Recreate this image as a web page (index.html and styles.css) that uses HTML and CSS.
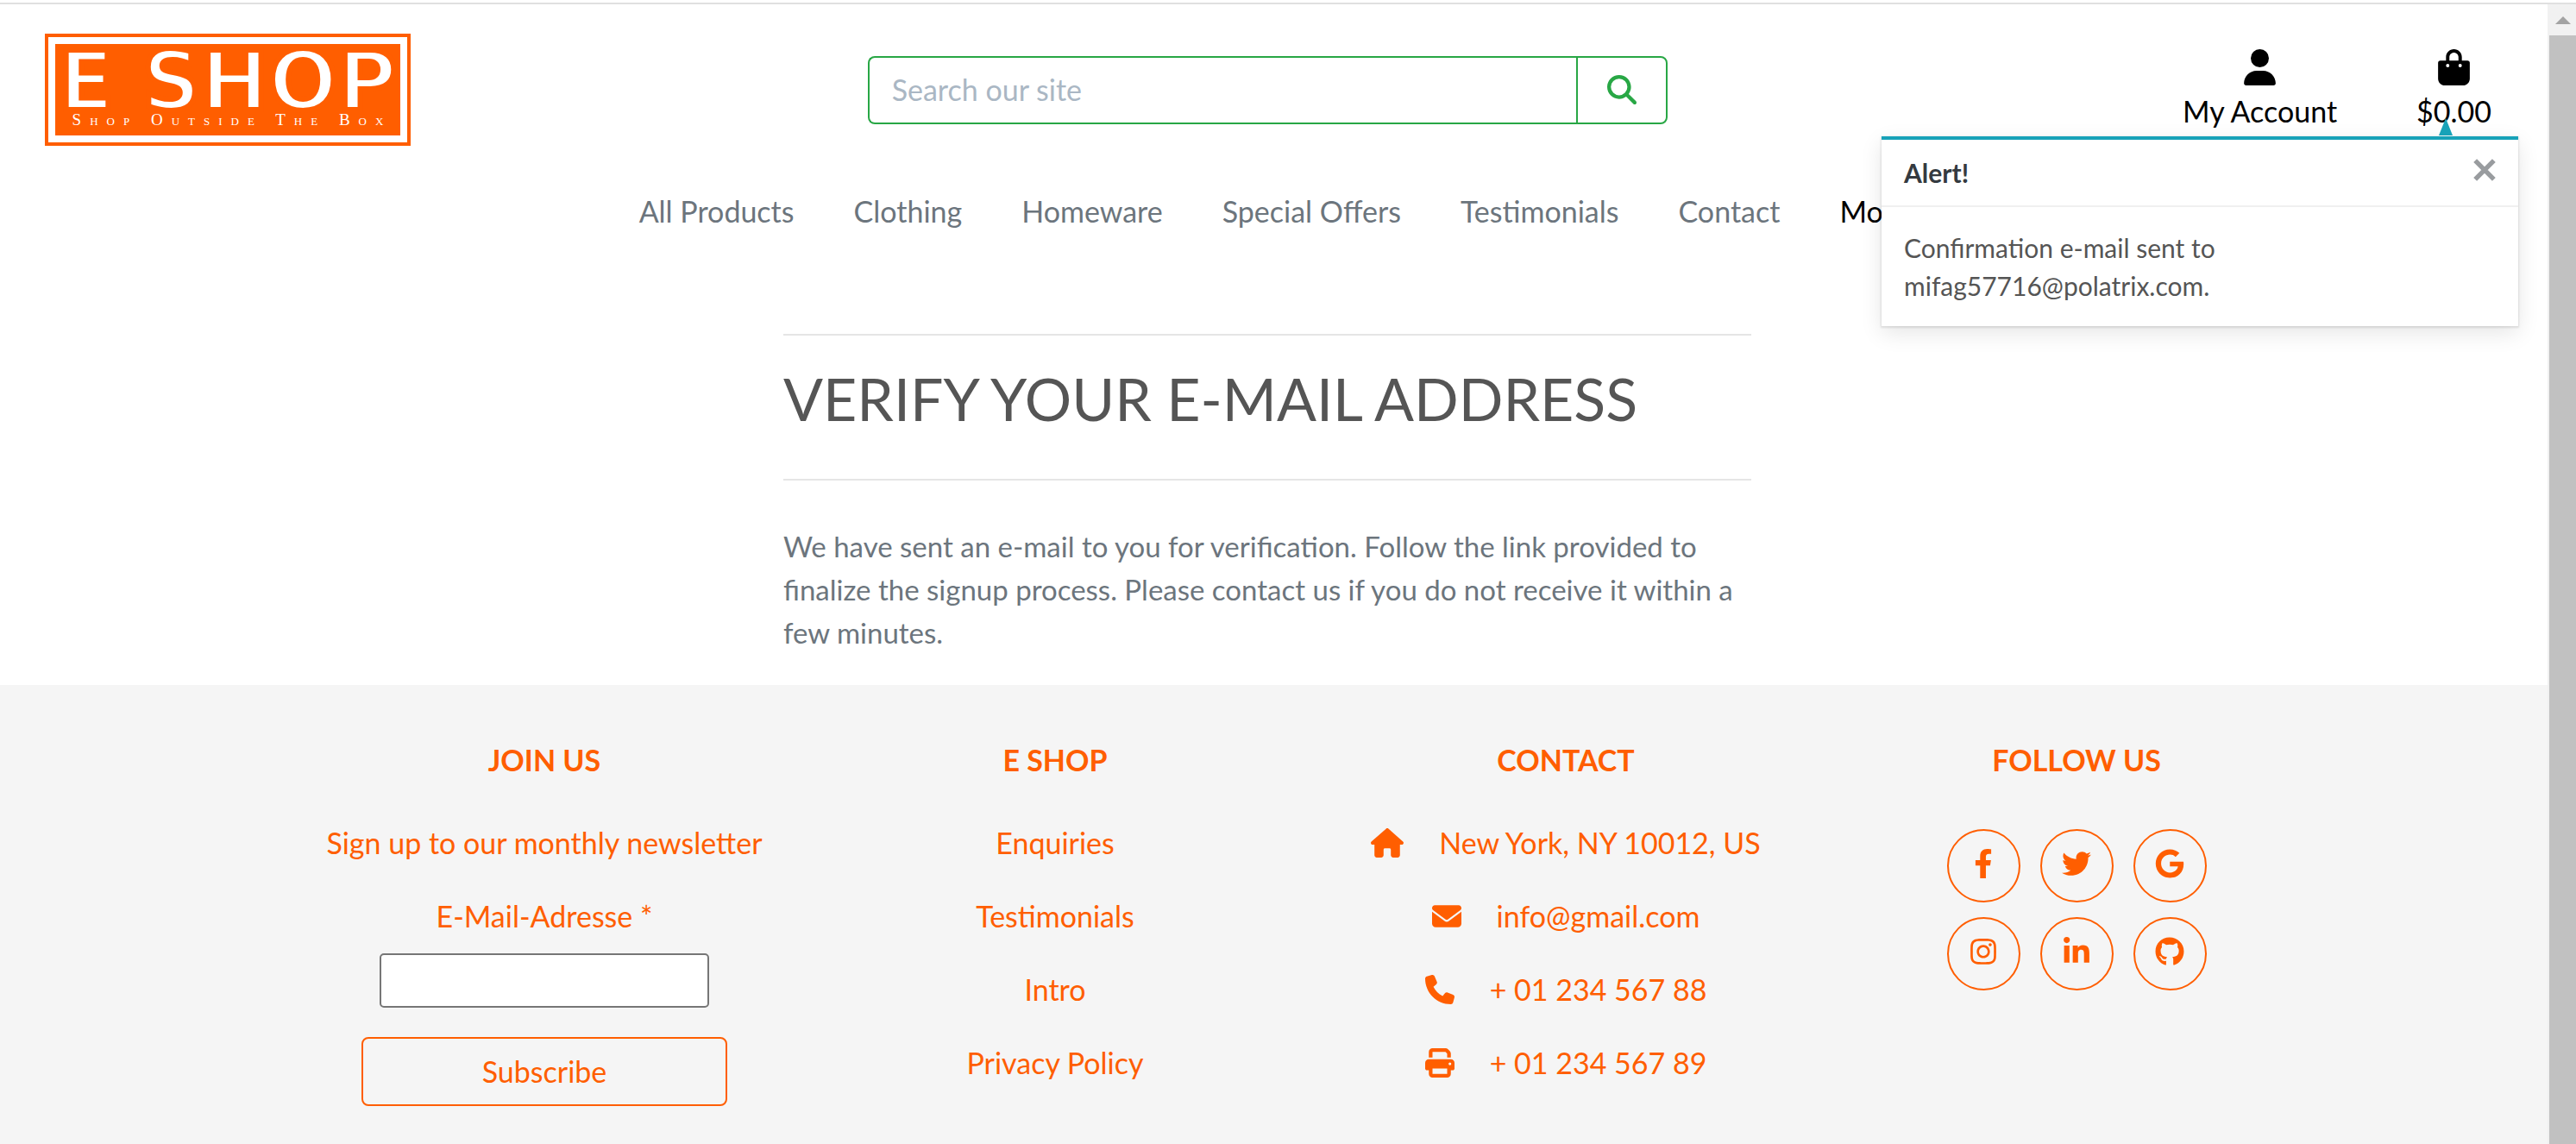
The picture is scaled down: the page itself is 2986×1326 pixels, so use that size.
FILE: index.html
```html
<!DOCTYPE html>
<html lang="en">
<head>
<meta charset="utf-8">
<title>E Shop - Verify Your E-mail Address</title>
<meta name="viewport" content="width=device-width, initial-scale=1">
<link rel="stylesheet" href="styles.css">
</head>
<body>
<svg class="sprite" aria-hidden="true">
  <symbol id="i-user" viewBox="0 0 448 512"><path d="M224 256A128 128 0 1 0 224 0a128 128 0 1 0 0 256zm-45.7 48C79.8 304 0 383.8 0 482.3C0 498.7 13.3 512 29.7 512H418.3c16.4 0 29.7-13.3 29.7-29.7C448 383.8 368.2 304 269.7 304H178.3z"/></symbol>
  <symbol id="i-bag" viewBox="0 0 448 512"><path d="M160 112c0-35.3 28.7-64 64-64s64 28.7 64 64v48H160V112zm-48 48H32c-17.7 0-32 14.3-32 32V416c0 53 43 96 96 96H352c53 0 96-43 96-96V192c0-17.7-14.3-32-32-32H336V112C336 50.1 285.9 0 224 0S112 50.1 112 112v48zm24 48a24 24 0 1 1 0 48 24 24 0 1 1 0-48zm152 24a24 24 0 1 1 48 0 24 24 0 1 1 -48 0z"/></symbol>
  <symbol id="i-search" viewBox="0 0 512 512"><path d="M416 208c0 45.9-14.9 88.3-40 122.7L502.6 457.4c12.5 12.5 12.5 32.8 0 45.3s-32.8 12.5-45.3 0L330.7 376c-34.4 25.2-76.8 40-122.7 40C93.1 416 0 322.9 0 208S93.1 0 208 0S416 93.1 416 208zM208 352a144 144 0 1 0 0-288 144 144 0 1 0 0 288z"/></symbol>
  <symbol id="i-home" viewBox="0 0 576 512"><path d="M575.8 255.5c0 18-15 32.1-32 32.1h-32V472c0 22.1-17.9 40-40 40H392c-22.1 0-40-17.9-40-40V376c0-13.3-10.7-24-24-24H248c-13.3 0-24 10.7-24 24v96c0 22.1-17.9 40-40 40H104c-22.1 0-40-17.9-40-40V287.6H32c-18 0-32-14-32-32.1c0-9 3-17 10-24L266.4 8c7-7 15-8 22-8s15 2 21 7L564.8 231.5c8 7 12 15 11 24z"/></symbol>
  <symbol id="i-mail" viewBox="0 0 512 512"><path d="M48 64C21.5 64 0 85.5 0 112c0 15.1 7.1 29.3 19.2 38.4L236.8 313.6c11.4 8.5 27 8.5 38.4 0L492.8 150.4c12.1-9.1 19.2-23.3 19.2-38.4c0-26.5-21.5-48-48-48H48zM0 176V384c0 35.3 28.7 64 64 64H448c35.3 0 64-28.7 64-64V176L294.4 339.2c-22.8 17.1-54 17.1-76.8 0L0 176z"/></symbol>
  <symbol id="i-phone" viewBox="0 0 512 512"><path d="M164.9 24.6c-7.7-18.6-28-28.5-47.4-23.2l-88 24C12.1 30.2 0 46 0 64C0 311.4 200.6 512 448 512c18 0 33.8-12.1 38.6-29.5l24-88c5.3-19.4-4.6-39.7-23.2-47.4l-96-40c-16.3-6.8-35.2-2.1-46.3 11.6L304.7 368C234.3 334.7 177.3 277.7 144 207.3L193.3 167c13.7-11.2 18.4-30 11.6-46.3l-40-96z"/></symbol>
  <symbol id="i-print" viewBox="0 0 512 512"><path d="M128 0C92.7 0 64 28.7 64 64v96h64V64H354.7L384 93.3V160h64V93.3c0-17-6.7-33.3-18.7-45.3L400 18.7C388 6.7 371.7 0 354.7 0H128zM384 352v32 64H128V384 368 352H384zm64 32h32c17.7 0 32-14.3 32-32V256c0-35.3-28.7-64-64-64H64c-35.3 0-64 28.7-64 64v96c0 17.7 14.3 32 32 32H64v64c0 35.3 28.7 64 64 64H384c35.3 0 64-28.7 64-64V384zM432 248a24 24 0 1 1 0 48 24 24 0 1 1 0-48z"/></symbol>
  <symbol id="i-facebook" viewBox="0 0 320 512"><path d="M279.14 288l14.22-92.66h-88.91v-60.13c0-25.35 12.42-50.06 52.24-50.06h40.42V6.26S260.43 0 225.36 0c-73.22 0-121.08 44.38-121.08 124.72v70.62H22.89V288h81.39v224h100.17V288z"/></symbol>
  <symbol id="i-twitter" viewBox="0 0 512 512"><path d="M459.37 151.716c.325 4.548.325 9.097.325 13.645 0 138.72-105.583 298.558-298.558 298.558-59.452 0-114.68-17.219-161.137-47.106 8.447.974 16.568 1.299 25.34 1.299 49.055 0 94.213-16.568 130.274-44.832-46.132-.975-84.792-31.188-98.112-72.772 6.498.974 12.995 1.624 19.818 1.624 9.421 0 18.843-1.3 27.614-3.573-48.081-9.747-84.143-51.98-84.143-102.985v-1.299c13.969 7.797 30.214 12.67 47.431 13.319-28.264-18.843-46.781-51.005-46.781-87.391 0-19.492 5.197-37.36 14.294-52.954 51.655 63.675 129.3 105.258 216.365 109.807-1.624-7.797-2.599-15.918-2.599-24.04 0-57.828 46.782-104.934 104.934-104.934 30.213 0 57.502 12.67 76.67 33.137 23.715-4.548 46.456-13.32 66.599-25.34-7.798 24.366-24.366 44.833-46.132 57.827 21.117-2.273 41.584-8.122 60.426-16.243-14.292 20.791-32.161 39.308-52.628 54.253z"/></symbol>
  <symbol id="i-google" viewBox="0 0 488 512"><path d="M488 261.8C488 403.3 391.1 504 248 504 110.8 504 0 393.2 0 256S110.8 8 248 8c66.8 0 123 24.5 166.3 64.9l-67.5 64.9C258.5 52.6 94.3 116.6 94.3 256c0 86.5 69.1 156.6 153.7 156.6 98.2 0 135-70.4 140.8-106.9H248v-85.3h236.1c2.3 12.7 3.9 24.9 3.9 41.4z"/></symbol>
  <symbol id="i-instagram" viewBox="0 0 448 512"><path d="M224.1 141c-63.6 0-114.9 51.3-114.9 114.9s51.3 114.9 114.9 114.9S339 319.5 339 255.9 287.7 141 224.1 141zm0 189.6c-41.1 0-74.7-33.5-74.7-74.7s33.5-74.7 74.7-74.7 74.7 33.5 74.7 74.7-33.6 74.7-74.7 74.7zm146.4-194.3c0 14.9-12 26.8-26.8 26.8-14.9 0-26.8-12-26.8-26.8s12-26.8 26.8-26.8 26.8 12 26.8 26.8zm76.1 27.2c-1.7-35.9-9.9-67.7-36.2-93.9-26.2-26.2-58-34.4-93.9-36.2-37-2.1-147.9-2.1-184.9 0-35.8 1.7-67.6 9.9-93.9 36.1s-34.4 58-36.2 93.9c-2.1 37-2.1 147.9 0 184.9 1.7 35.9 9.9 67.7 36.2 93.9s58 34.4 93.9 36.2c37 2.1 147.9 2.1 184.9 0 35.9-1.7 67.7-9.9 93.9-36.2 26.2-26.2 34.4-58 36.2-93.9 2.1-37 2.1-147.8 0-184.8zM398.8 388c-7.8 19.6-22.9 34.7-42.6 42.6-29.5 11.7-99.5 9-132.1 9s-102.7 2.6-132.1-9c-19.6-7.8-34.7-22.9-42.6-42.6-11.7-29.5-9-99.5-9-132.1s-2.6-102.7 9-132.1c7.8-19.6 22.9-34.7 42.6-42.6 29.5-11.7 99.5-9 132.1-9s102.7-2.6 132.1 9c19.6 7.8 34.7 22.9 42.6 42.6 11.7 29.5 9 99.5 9 132.1s2.7 102.7-9 132.1z"/></symbol>
  <symbol id="i-linkedin" viewBox="0 0 448 512"><path d="M100.28 448H7.4V148.9h92.88zM53.79 108.1C24.09 108.1 0 83.5 0 53.8a53.79 53.79 0 0 1 107.58 0c0 29.7-24.1 54.3-53.79 54.3zM447.9 448h-92.68V302.4c0-34.7-.7-79.2-48.29-79.2-48.29 0-55.69 37.7-55.69 76.7V448h-92.78V148.9h89.08v40.8h1.3c12.4-23.5 42.69-48.3 87.88-48.3 94 0 111.28 61.9 111.28 142.3V448z"/></symbol>
  <symbol id="i-github" viewBox="0 0 496 512"><path d="M244.8 8C106.1 8 0 113.3 0 252c0 110.9 69.8 205.8 169.5 239.2 12.8 2.3 17.3-5.6 17.3-12.1 0-6.2-.3-40.4-.3-61.4 0 0-70 15-84.7-29.8 0 0-11.4-29.1-27.8-36.6 0 0-22.9-15.7 1.6-15.4 0 0 24.9 2 38.6 25.8 21.9 38.6 58.6 27.5 72.9 20.9 2.3-16 8.8-27.1 16-33.7-55.9-6.2-112.3-14.3-112.3-110.5 0-27.5 7.6-41.3 23.6-58.9-2.6-6.5-11.1-33.3 2.6-67.9 20.9-6.5 69 27 69 27 20-5.6 41.5-8.5 62.8-8.5s42.8 2.9 62.8 8.5c0 0 48.1-33.6 69-27 13.7 34.7 5.2 61.4 2.6 67.9 16 17.7 25.8 31.5 25.8 58.9 0 96.5-58.9 104.2-114.8 110.5 9.2 7.9 17 22.9 17 46.4 0 33.7-.3 75.4-.3 83.6 0 6.5 4.6 14.4 17.3 12.1C428.2 457.8 496 362.9 496 252 496 113.3 383.5 8 244.8 8z"/></symbol>
</svg>

<div class="frame">
  <div class="page">
    <header class="header">
      <div class="topbar">
        <a class="logo" href="#">
          <span class="logo-inner">
            <span class="logo-name">E SHOP</span>
            <span class="logo-tag">Shop Outside The Box</span>
          </span>
        </a>
        <form class="search">
          <input class="search-input" type="text" placeholder="Search our site" aria-label="Search our site">
          <button class="search-button" type="button" aria-label="Search"><svg class="icon"><use href="#i-search"/></svg></button>
        </form>
        <div class="account">
          <a class="account-link" href="#"><svg class="account-icon"><use href="#i-user"/></svg>My Account</a>
          <a class="account-link" href="#"><svg class="account-icon"><use href="#i-bag"/></svg>$0.00</a>
        </div>
      </div>
      <nav class="nav">
        <a href="#">All Products</a>
        <a href="#">Clothing</a>
        <a href="#">Homeware</a>
        <a href="#">Special Offers</a>
        <a href="#">Testimonials</a>
        <a href="#">Contact</a>
        <a class="nav-more" href="#">More</a>
      </nav>
      <div class="toast" role="alert">
        <div class="toast-head">
          <strong>Alert!</strong>
          <button class="toast-close" type="button" aria-label="Close"><svg class="close-icon" viewBox="0 0 24 24"><path d="M2 2L22 22M22 2L2 22"/></svg></button>
        </div>
        <p class="toast-body">Confirmation e-mail sent to<br>mifag57716@polatrix.com.</p>
      </div>
    </header>

    <main class="verify">
      <hr>
      <h1>VERIFY YOUR E-MAIL ADDRESS</h1>
      <hr>
      <p>We have sent an e-mail to you for verification. Follow the link provided to finalize the signup process. Please contact us if you do not receive it within a few minutes.</p>
    </main>

    <footer class="footer">
      <section class="footer-col">
        <h2>JOIN US</h2>
        <form class="signup">
          <p>Sign up to our monthly newsletter</p>
          <label for="email">E-Mail-Adresse *</label>
          <input id="email" class="signup-input" type="email">
          <button class="signup-button" type="button">Subscribe</button>
        </form>
      </section>
      <section class="footer-col">
        <h2>E SHOP</h2>
        <ul class="links">
          <li><a href="#">Enquiries</a></li>
          <li><a href="#">Testimonials</a></li>
          <li><a href="#">Intro</a></li>
          <li><a href="#">Privacy Policy</a></li>
        </ul>
      </section>
      <section class="footer-col">
        <h2>CONTACT</h2>
        <ul class="links">
          <li><svg class="icon icon-wide"><use href="#i-home"/></svg>New York, NY 10012, US</li>
          <li><svg class="icon"><use href="#i-mail"/></svg>info@gmail.com</li>
          <li><svg class="icon"><use href="#i-phone"/></svg>+ 01 234 567 88</li>
          <li><svg class="icon"><use href="#i-print"/></svg>+ 01 234 567 89</li>
        </ul>
      </section>
      <section class="footer-col">
        <h2>FOLLOW US</h2>
        <div class="social">
          <a href="#" aria-label="Facebook"><svg class="icon"><use href="#i-facebook"/></svg></a>
          <a href="#" aria-label="Twitter"><svg class="icon"><use href="#i-twitter"/></svg></a>
          <a href="#" aria-label="Google"><svg class="icon"><use href="#i-google"/></svg></a>
          <a href="#" aria-label="Instagram"><svg class="icon"><use href="#i-instagram"/></svg></a>
          <a href="#" aria-label="LinkedIn"><svg class="icon"><use href="#i-linkedin"/></svg></a>
          <a href="#" aria-label="GitHub"><svg class="icon"><use href="#i-github"/></svg></a>
        </div>
      </section>
    </footer>
  </div>
  <div class="scrollbar" aria-hidden="true">
    <svg class="scroll-arrow" viewBox="0 0 18 9"><path d="M9 0L18 9H0z"/></svg>
    <div class="scroll-thumb"></div>
  </div>
</div>
</body>
</html>
```
FILE: styles.css
```css
* { box-sizing: border-box; }

body {
  margin: 0;
  padding-top: 3px;
  font-family: Lato, "Liberation Sans", sans-serif;
  font-size: 34px;
  line-height: 50px;
  color: #555;
  background: #fff;
}

a { color: inherit; text-decoration: none; }
h1, h2, p, ul { margin: 0; padding: 0; }
ul { list-style: none; }
button, input { font: inherit; }
svg { fill: currentColor; }

.sprite { display: none; }
.icon { width: 34px; height: 34px; flex: none; }
.icon-wide { width: 38px; }

.frame {
  display: flex;
  min-height: calc(100vh - 3px);
  border-top: 2px solid #e0e0e0;
}

.page {
  flex: 1;
  display: flex;
  flex-direction: column;
}

/* Header */
.header {
  position: relative;
  padding-top: 34px;
}

.topbar {
  display: grid;
  grid-template-columns: repeat(3, 1fr);
  align-items: center;
  padding-right: 14px;
}

.logo {
  justify-self: start;
  width: 424px;
  margin-left: 52px;
  padding: 8px;
  border: 4px solid #ff5e00;
}

.logo-inner {
  display: flex;
  flex-direction: column;
  align-items: center;
  padding: 4px 0 13px;
  background: #ff5e00;
  color: #fff;
}

.logo-name {
  font-family: "DejaVu Sans", sans-serif;
  font-size: 94px;
  font-weight: 700;
  line-height: 79px;
  white-space: nowrap;
  -webkit-text-stroke: 6px #ff5e00;
}

.logo-tag {
  padding-left: 10px;
  font-family: "Liberation Serif", serif;
  font-size: 19px;
  font-variant: small-caps;
  line-height: 10px;
  letter-spacing: 10px;
  white-space: nowrap;
}

.search {
  display: flex;
  height: 79px;
  margin: 0 26px;
}

.search-input {
  flex: 1;
  min-width: 0;
  padding: 0 26px;
  border: 2px solid #28a745;
  border-right: 0;
  border-radius: 8px 0 0 8px;
  background: #fff;
}

.search-input::placeholder { color: #aab7c4; opacity: 1; }

.search-button {
  display: flex;
  align-items: center;
  justify-content: center;
  width: 106px;
  padding: 0;
  border: 2px solid #28a745;
  border-radius: 0 8px 8px 0;
  background: #fff;
  color: #28a745;
}

.account {
  display: flex;
  justify-content: flex-end;
  align-self: start;
  gap: 92px;
  padding: 18px 51px 0 0;
  color: #000;
}

.account-link {
  display: flex;
  flex-direction: column;
  align-items: center;
  gap: 5px;
}

.account-icon { width: 37px; height: 42px; }

.nav {
  display: flex;
  justify-content: center;
  gap: 69px;
  margin-top: 51px;
  color: #6c757d;
}

.nav-more { color: #000; }

/* Alert message */
.toast {
  position: absolute;
  top: 153px;
  right: 34px;
  width: 738px;
  border-top: 4px solid #17a2b8;
  background: #fff;
  box-shadow: 0 1px 2px 1px rgba(0, 0, 0, 0.1), 0 8px 24px rgba(0, 0, 0, 0.1);
  font-size: 30px;
  line-height: 44px;
}

.toast::before {
  content: "";
  position: absolute;
  top: -25px;
  right: 76px;
  border: 8px solid transparent;
  border-top: 0;
  border-bottom: 20px solid #17a2b8;
}

.toast-head {
  display: flex;
  justify-content: space-between;
  padding: 16px 26px;
  border-bottom: 2px solid #f0f0f0;
  color: #343a40;
}

.toast-close {
  display: flex;
  height: 36px;
  padding: 6px 0;
  border: 0;
  background: none;
  color: #999c9f;
}

.close-icon { width: 26px; height: 26px; stroke: currentColor; stroke-width: 5; }

.toast-body { padding: 25px 26px; }

/* Verification text */
.verify {
  width: 38%;
  margin-left: 908px;
  padding: 117px 0 36px;
}

.verify hr {
  margin: 0;
  border: 0;
  border-top: 2px solid #e5e5e5;
}

.verify h1 {
  margin: 33px 0 53px;
  font-size: 68px;
  font-weight: 400;
  line-height: 80px;
}

.verify p {
  margin-top: 51px;
  font-size: 33px;
  color: #6c757d;
}

/* Footer */
.footer {
  flex: 1;
  display: grid;
  grid-template-columns: repeat(4, 1fr);
  padding: 62px 250px 40px 335px;
  background: #f5f5f5;
  color: #ff5e00;
  text-align: center;
}

.footer h2 {
  margin-bottom: 46px;
  font-size: 34px;
  font-weight: 700;
}

.links {
  display: grid;
  gap: 35px;
}

.links li {
  display: flex;
  justify-content: center;
  align-items: center;
  gap: 41px;
}

.signup {
  display: flex;
  flex-direction: column;
  align-items: center;
}

.signup label { margin-top: 35px; }

.signup-input {
  width: 382px;
  height: 63px;
  margin: 18px 0 34px;
  border: 2px solid #767676;
  border-radius: 5px;
  background: #fff;
}

.signup-button {
  width: 424px;
  height: 80px;
  border: 2px solid #ff5e00;
  border-radius: 8px;
  background: none;
  color: inherit;
}

.social {
  display: grid;
  grid-template-columns: repeat(3, 85px);
  justify-content: center;
  gap: 17px 23px;
  padding-top: 9px;
}

.social a {
  display: flex;
  align-items: center;
  justify-content: center;
  height: 85px;
  padding-bottom: 6px;
  border: 2px solid #ff5e00;
  border-radius: 50%;
}

/* Window scrollbar */
.scrollbar {
  display: flex;
  flex-direction: column;
  align-items: center;
  width: 33px;
  padding: 14px 0 0 2px;
  background: #f1f1f1;
}

.scroll-arrow { width: 18px; height: 9px; fill: #a3a3a3; }

.scroll-thumb {
  flex: 1;
  width: 100%;
  margin-top: 13px;
  background: #c1c1c1;
}
```
